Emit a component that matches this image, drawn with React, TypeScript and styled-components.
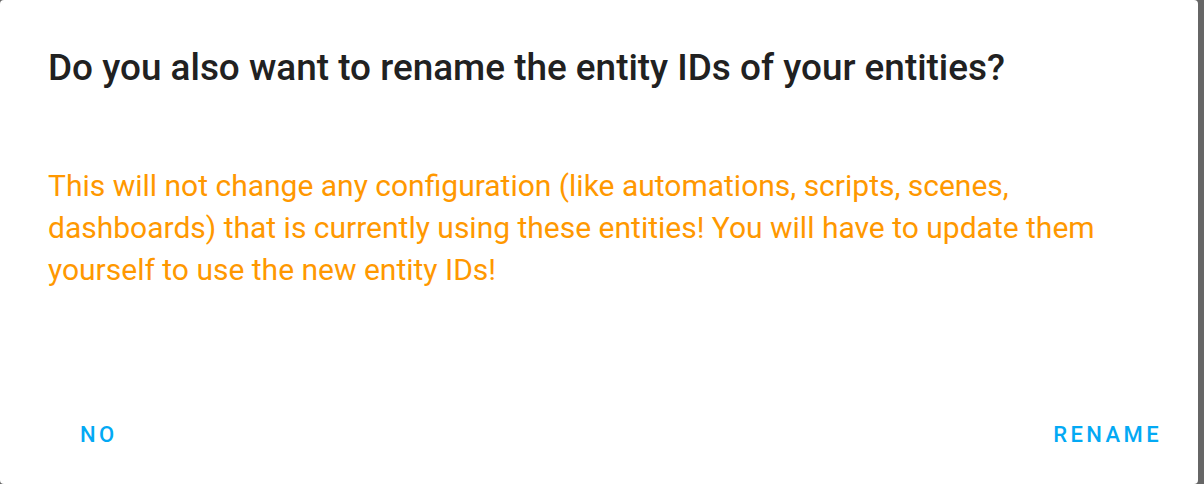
import styled, { createGlobalStyle } from 'styled-components';

const GlobalStyle = createGlobalStyle`
    html, body {
        margin: 0;
        padding: 0;
        background: #666666;
        width: 1204px;
        height: 484px;
        overflow: hidden;
    }
`;

// Dialog surface
const Dialog = styled.div`
    box-sizing: border-box;
    width: 1198px;
    height: 484px;
    background: #ffffff;
    border-radius: 4px;
    display: flex;
    flex-direction: column;
    font-family: Roboto, "Noto Sans", sans-serif;
`;

const Title = styled.h2`
    margin: 0;
    padding: 46px 48px 0 48px;
    font-size: 36.9px;
    line-height: 44px;
    font-weight: 500;
    color: #212121;
`;

const Content = styled.div`
    flex: 1;
    padding: 75px 48px 0 48px;
`;

const Warning = styled.p`
    margin: 0;
    font-size: 30px;
    line-height: 42px;
    font-weight: 400;
    color: #ff9800;
`;

const Actions = styled.div`
    display: flex;
    justify-content: space-between;
    align-items: center;
    padding: 0 18px 23px 62px;
`;

const Button = styled.button`
    height: 54px;
    border: none;
    background: transparent;
    padding: 0 18px;
    font-family: Roboto, "Noto Sans", sans-serif;
    font-size: 22px;
    font-weight: 500;
    letter-spacing: 3.4px;
    text-transform: uppercase;
    color: #03a9f4;
    cursor: pointer;
`;

export default function App() {
    return (
        <>
            <GlobalStyle />
            <Dialog>
                <Title>Do you also want to rename the entity IDs of your entities?</Title>
                <Content>
                    <Warning>
                        This will not change any configuration (like automations, scripts, scenes,
                        dashboards) that is currently using these entities! You will have to update them
                        yourself to use the new entity IDs!
                    </Warning>
                </Content>
                <Actions>
                    <Button>No</Button>
                    <Button>Rename</Button>
                </Actions>
            </Dialog>
        </>
    );
}
